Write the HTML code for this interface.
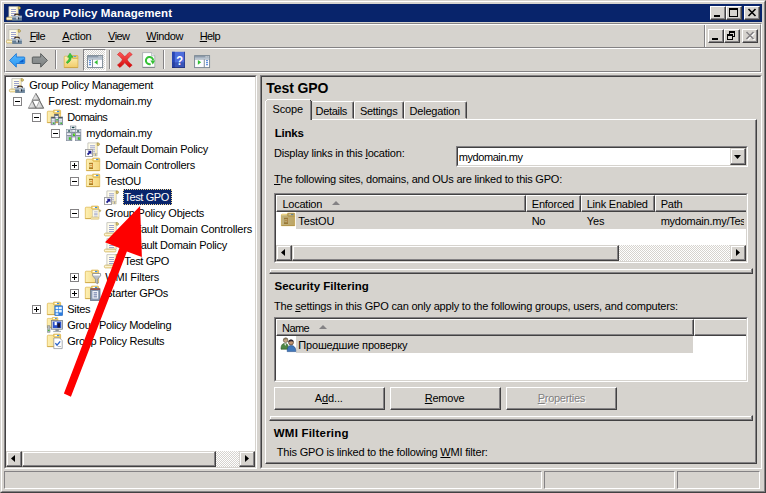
<!DOCTYPE html>
<html><head><meta charset="utf-8"><title>Group Policy Management</title>
<style>
*{box-sizing:border-box;margin:0;padding:0}
html,body{width:766px;height:493px;overflow:hidden;background:#d6d3ce}
body{position:relative;font-family:"Liberation Sans","Noto Sans CJK SC",sans-serif;font-size:11px;color:#000}
.a{position:absolute}
.t{position:absolute;white-space:nowrap;line-height:16px;height:16px}
u{text-decoration:underline;text-underline-offset:1px}
svg{position:absolute;overflow:visible}
.btn{position:absolute;background:#d6d3ce;border:1px solid;border-color:#fff #424142 #424142 #fff;box-shadow:inset -1px -1px 0 #848284}
.sb{position:absolute;background:#d6d3ce;border:1px solid;border-color:#d6d3ce #424142 #424142 #d6d3ce;box-shadow:inset -1px -1px 0 #848284,inset 1px 1px 0 #fff}
.sunk{position:absolute;border:1px solid;border-color:#848284 #fff #fff #848284}
.sunk>.in{position:absolute;left:0;top:0;right:0;bottom:0;border:1px solid;border-color:#424142 #d6d3ce #d6d3ce #424142}
.chk{position:absolute;background-image:conic-gradient(#fff 25%,#d6d3ce 0 50%,#fff 0 75%,#d6d3ce 0);background-size:2px 2px}
.hd{position:absolute;background:#d6d3ce;border:1px solid;border-color:#fff #424142 #424142 #fff;box-shadow:inset -1px -1px 0 #848284}
.rs{position:absolute;height:6px;border:1px solid;border-color:#d6d3ce #424142 #424142 #d6d3ce;box-shadow:inset -1px -1px 0 #848284,inset 1px 1px 0 #fff}
.eb{position:absolute;width:9px;height:9px;border:1px solid #848284;background:#fff}
.eb:before{content:"";position:absolute;left:1px;top:3px;width:5px;height:1px;background:#000}
.eb.p:after{content:"";position:absolute;left:3px;top:1px;width:1px;height:5px;background:#000}
.tsep{position:absolute;top:50px;width:2px;height:19px;border-left:1px solid #848284;border-right:1px solid #fff}
</style></head><body>
<!-- window frame -->
<div class="a" style="left:0;top:0;width:766px;height:493px;border:1px solid;border-color:#d6d3ce #424142 #424142 #d6d3ce"></div>
<div class="a" style="left:1px;top:1px;width:764px;height:491px;border:1px solid;border-color:#fff #848284 #848284 #fff"></div>
<!-- title bar -->
<div class="a" style="left:4px;top:4px;width:758px;height:18px;background:#08246b"></div>
<div class="btn" style="left:710px;top:6px;width:16px;height:14px"><div class="a" style="left:3px;top:8px;width:6px;height:2px;background:#000"></div></div>
<div class="btn" style="left:726px;top:6px;width:16px;height:14px"><div class="a" style="left:2px;top:1px;width:9px;height:9px;border:1px solid #000;border-top-width:2px"></div></div>
<div class="btn" style="left:744px;top:6px;width:16px;height:14px"><svg style="left:3px;top:2px" width="8" height="7" viewBox="0 0 8 7"><path d="M0.5 0L7.5 7M7.5 0L0.5 7" stroke="#000" stroke-width="1.6" fill="none"/></svg></div>
<!-- rebar -->
<div class="a" style="left:4px;top:23px;width:758px;height:50px;border:1px solid;border-color:#848284 #fff #fff #848284"></div>
<div class="a" style="left:5px;top:24px;width:756px;height:48px;border:1px solid;border-color:#fff #848284 #848284 #fff"></div>
<div class="a" style="left:6px;top:47px;width:754px;height:2px;border-top:1px solid #848284;border-bottom:1px solid #fff"></div>
<div class="a" style="left:704px;top:25px;width:2px;height:22px;border-left:1px solid #848284;border-right:1px solid #fff"></div>
<!-- mdi buttons -->
<div class="btn" style="left:708px;top:29px;width:16px;height:14px"><div class="a" style="left:3px;top:8px;width:6px;height:2px;background:#000"></div></div>
<div class="btn" style="left:724px;top:29px;width:16px;height:14px"><div class="a" style="left:4px;top:1px;width:6px;height:6px;border:1px solid #000;border-top-width:2px"></div><div class="a" style="left:2px;top:4px;width:6px;height:6px;border:1px solid #000;border-top-width:2px;background:#d6d3ce"></div></div>
<div class="btn" style="left:742px;top:29px;width:16px;height:14px"><svg style="left:4px;top:3px" width="8" height="7" viewBox="0 0 8 7"><path d="M0.5 0L7.5 7M7.5 0L0.5 7" stroke="#fff" stroke-width="1.6" fill="none"/></svg><svg style="left:3px;top:2px" width="8" height="7" viewBox="0 0 8 7"><path d="M0.5 0L7.5 7M7.5 0L0.5 7" stroke="#848284" stroke-width="1.6" fill="none"/></svg></div>
<!-- toolbar -->
<div class="tsep" style="left:55px"></div><div class="tsep" style="left:109px"></div><div class="tsep" style="left:163px"></div>
<div class="chk" style="left:83px;top:49px;width:23px;height:22px"></div>
<div class="a" style="left:83px;top:49px;width:23px;height:22px;border:1px solid;border-color:#848284 #fff #fff #848284"></div>
<!-- left panel -->
<div class="sunk" style="left:4px;top:75px;width:253px;height:394px"><div class="in" style="background:#fff"></div></div>
<div class="a" style="left:6px;top:451px;width:249px;height:16px;background:#d6d3ce"></div>
<div class="chk" style="left:216px;top:451px;width:23px;height:16px"></div>
<div class="sb" style="left:6px;top:451px;width:16px;height:16px"><svg style="left:4px;top:3px" width="4" height="7" viewBox="0 0 4 7"><path d="M4 0L4 7L0 3.5Z" fill="#000"/></svg></div>
<div class="sb" style="left:22px;top:451px;width:194px;height:16px"></div>
<div class="sb" style="left:239px;top:451px;width:16px;height:16px"><svg style="left:5px;top:3px" width="4" height="7" viewBox="0 0 4 7"><path d="M0 0L0 7L4 3.5Z" fill="#000"/></svg></div>
<!-- tree selection -->
<div class="a" style="left:123px;top:189px;width:49px;height:16px;background:#08246b;outline:1px dotted #f5db95;outline-offset:-1px"></div>
<!-- expand boxes -->
<div class="eb" style="left:13px;top:97px"></div>
<div class="eb" style="left:32px;top:113px"></div>
<div class="eb" style="left:51px;top:129px"></div>
<div class="eb p" style="left:70px;top:161px"></div>
<div class="eb" style="left:70px;top:177px"></div>
<div class="eb" style="left:70px;top:209px"></div>
<div class="eb p" style="left:70px;top:273px"></div>
<div class="eb p" style="left:70px;top:289px"></div>
<div class="eb p" style="left:32px;top:305px"></div>
<!-- right panel -->
<div class="sunk" style="left:260px;top:75px;width:502px;height:394px"><div class="in"></div></div>
<!-- tab page -->
<div class="a" style="left:265px;top:119px;width:492px;height:345px;border:1px solid;border-color:#fff #424142 #424142 #fff;box-shadow:inset -1px -1px 0 #848284"></div>
<!-- tabs: unselected -->
<div class="a" style="left:312px;top:101px;width:42px;height:18px;border:1px solid;border-color:#fff #424142 transparent transparent;box-shadow:inset -1px 0 0 #848284;border-radius:0 2px 0 0"></div>
<div class="a" style="left:354px;top:101px;width:50px;height:18px;border:1px solid;border-color:#fff #424142 transparent #fff;box-shadow:inset -1px 0 0 #848284;border-radius:2px 2px 0 0"></div>
<div class="a" style="left:404px;top:101px;width:63px;height:18px;border:1px solid;border-color:#fff #424142 transparent #fff;box-shadow:inset -1px 0 0 #848284;border-radius:2px 2px 0 0"></div>
<!-- selected tab -->
<div class="a" style="left:266px;top:100px;width:44px;height:20px;background:#d6d3ce"></div>
<div class="a" style="left:265px;top:101px;width:1px;height:19px;background:#fff"></div>
<div class="a" style="left:266px;top:100px;width:1px;height:1px;background:#fff"></div>
<div class="a" style="left:267px;top:99px;width:43px;height:1px;background:#fff"></div>
<div class="a" style="left:310px;top:100px;width:1px;height:1px;background:#424142"></div>
<div class="a" style="left:310px;top:101px;width:1px;height:19px;background:#848284"></div>
<div class="a" style="left:311px;top:101px;width:1px;height:19px;background:#424142"></div>
<!-- combo -->
<div class="sunk" style="left:456px;top:146px;width:292px;height:21px"><div class="in" style="background:#fff"></div></div>
<div class="sb" style="left:730px;top:148px;width:16px;height:17px"><svg style="left:3px;top:6px" width="7" height="4" viewBox="0 0 7 4"><path d="M0 0L7 0L3.5 4Z" fill="#000"/></svg></div>
<!-- list 1 -->
<div class="sunk" style="left:274px;top:193px;width:474px;height:70px"><div class="in" style="background:#fff"></div></div>
<div class="a" style="left:276px;top:195px;width:470px;height:66px;overflow:hidden">
 <div class="hd" style="left:0;top:0;width:250px;height:17px"></div>
 <div class="hd" style="left:250px;top:0;width:55px;height:17px"></div>
 <div class="hd" style="left:305px;top:0;width:74px;height:17px"></div>
 <div class="hd" style="left:379px;top:0;width:120px;height:17px"></div>
 <svg style="left:56px;top:6px" width="8" height="4" viewBox="0 0 8 4"><path d="M0 4L4 0L8 4Z" fill="#848284"/></svg>
 <div class="a" style="left:20px;top:17px;width:460px;height:17px;background:#d6d3ce"></div>
 <div class="a" style="left:0;top:50px;width:470px;height:16px;background:#d6d3ce"></div>
 <div class="chk" style="left:343px;top:50px;width:111px;height:16px"></div>
 <div class="sb" style="left:0;top:50px;width:16px;height:16px"><svg style="left:4px;top:3px" width="4" height="7" viewBox="0 0 4 7"><path d="M4 0L4 7L0 3.5Z" fill="#000"/></svg></div>
 <div class="sb" style="left:16px;top:50px;width:327px;height:16px"></div>
 <div class="sb" style="left:454px;top:50px;width:16px;height:16px"><svg style="left:5px;top:3px" width="4" height="7" viewBox="0 0 4 7"><path d="M0 0L0 7L4 3.5Z" fill="#000"/></svg></div>
</div>
<!-- separators -->
<div class="rs" style="left:269px;top:268px;width:484px"></div>
<div class="rs" style="left:269px;top:415px;width:484px"></div>
<!-- list 2 -->
<div class="sunk" style="left:274px;top:317px;width:474px;height:65px"><div class="in" style="background:#fff"></div></div>
<div class="a" style="left:276px;top:319px;width:470px;height:61px;overflow:hidden">
 <div class="hd" style="left:0;top:0;width:418px;height:17px"></div>
 <div class="hd" style="left:418px;top:0;width:80px;height:17px"></div>
 <svg style="left:43px;top:6px" width="8" height="4" viewBox="0 0 8 4"><path d="M0 4L4 0L8 4Z" fill="#848284"/></svg>
 <div class="a" style="left:20px;top:17px;width:397px;height:17px;background:#d6d3ce"></div>
</div>
<!-- buttons -->
<div class="btn" style="left:274px;top:387px;width:111px;height:23px"></div>
<div class="btn" style="left:390px;top:387px;width:111px;height:23px"></div>
<div class="btn" style="left:506px;top:387px;width:111px;height:23px"></div>
<!-- status bar -->
<div class="a" style="left:4px;top:471px;width:538px;height:18px;border:1px solid;border-color:#848284 #fff #fff #848284"></div>
<div class="a" style="left:544px;top:471px;width:131px;height:18px;border:1px solid;border-color:#848284 #fff #fff #848284"></div>
<div class="a" style="left:677px;top:471px;width:83px;height:18px;border:1px solid;border-color:#848284 #fff #fff #848284"></div>
<div class="t" style="left:24.70px;top:4.62px;font-size:11.5px;letter-spacing:0.106px;font-weight:bold;color:#fff;">Group Policy Management</div>
<div class="t" style="left:29.70px;top:28.19px;font-size:11px;letter-spacing:-0.634px;"><u>F</u>ile</div>
<div class="t" style="left:62.30px;top:28.19px;font-size:11px;letter-spacing:-0.230px;"><u>A</u>ction</div>
<div class="t" style="left:108.10px;top:28.19px;font-size:11px;letter-spacing:-0.589px;"><u>V</u>iew</div>
<div class="t" style="left:146.30px;top:28.19px;font-size:11px;letter-spacing:-0.404px;"><u>W</u>indow</div>
<div class="t" style="left:199.70px;top:28.19px;font-size:11px;letter-spacing:-0.581px;"><u>H</u>elp</div>
<div class="t" style="left:29.30px;top:77.19px;font-size:11px;letter-spacing:-0.284px;">Group Policy Management</div>
<div class="t" style="left:48.30px;top:93.19px;font-size:11px;letter-spacing:-0.108px;">Forest: mydomain.my</div>
<div class="t" style="left:67.30px;top:109.19px;font-size:11px;letter-spacing:-0.487px;">Domains</div>
<div class="t" style="left:86.30px;top:125.19px;font-size:11px;letter-spacing:-0.252px;">mydomain.my</div>
<div class="t" style="left:105.30px;top:141.19px;font-size:11px;letter-spacing:-0.263px;">Default Domain Policy</div>
<div class="t" style="left:105.30px;top:157.19px;font-size:11px;letter-spacing:-0.248px;">Domain Controllers</div>
<div class="t" style="left:105.30px;top:173.19px;font-size:11px;letter-spacing:-0.131px;">TestOU</div>
<div class="t" style="left:124.30px;top:189.19px;font-size:11px;letter-spacing:-0.373px;color:#fff;">Test GPO</div>
<div class="t" style="left:105.30px;top:205.19px;font-size:11px;letter-spacing:-0.231px;">Group Policy Objects</div>
<div class="t" style="left:124.30px;top:221.19px;font-size:11px;letter-spacing:-0.168px;">Default Domain Controllers</div>
<div class="t" style="left:124.30px;top:237.19px;font-size:11px;letter-spacing:-0.263px;">Default Domain Policy</div>
<div class="t" style="left:124.30px;top:253.19px;font-size:11px;letter-spacing:-0.373px;">Test GPO</div>
<div class="t" style="left:105.30px;top:269.19px;font-size:11px;letter-spacing:-0.155px;">WMI Filters</div>
<div class="t" style="left:105.30px;top:285.19px;font-size:11px;letter-spacing:-0.278px;">Starter GPOs</div>
<div class="t" style="left:67.30px;top:301.19px;font-size:11px;letter-spacing:-0.314px;">Sites</div>
<div class="t" style="left:67.30px;top:317.19px;font-size:11px;letter-spacing:-0.322px;">Group Policy Modeling</div>
<div class="t" style="left:67.30px;top:333.19px;font-size:11px;letter-spacing:-0.291px;">Group Policy Results</div>
<div class="t" style="left:266.30px;top:80.15px;font-size:14px;letter-spacing:-0.083px;font-weight:bold;">Test GPO</div>
<div class="t" style="left:272.50px;top:101.19px;font-size:11px;letter-spacing:-0.121px;">Scope</div>
<div class="t" style="left:315.60px;top:103.19px;font-size:11px;letter-spacing:-0.318px;">Details</div>
<div class="t" style="left:359.90px;top:103.19px;font-size:11px;letter-spacing:-0.281px;">Settings</div>
<div class="t" style="left:409.60px;top:103.19px;font-size:11px;letter-spacing:-0.219px;">Delegation</div>
<div class="t" style="left:274.80px;top:125.22px;font-size:11.5px;letter-spacing:-0.249px;font-weight:bold;">Links</div>
<div class="t" style="left:274.00px;top:144.69px;font-size:11px;letter-spacing:-0.208px;">Display links in this <u>l</u>ocation:</div>
<div class="t" style="left:458.80px;top:148.89px;font-size:11px;letter-spacing:-0.434px;">mydomain.my</div>
<div class="t" style="left:274.00px;top:170.69px;font-size:11px;letter-spacing:-0.220px;"><u>T</u>he following sites, domains, and OUs are linked to this GPO:</div>
<div class="t" style="left:282.50px;top:195.69px;font-size:11px;letter-spacing:-0.249px;">Location</div>
<div class="t" style="left:531.80px;top:195.69px;font-size:11px;letter-spacing:-0.229px;">Enforced</div>
<div class="t" style="left:586.70px;top:195.69px;font-size:11px;letter-spacing:-0.217px;">Link Enabled</div>
<div class="t" style="left:660.70px;top:195.69px;font-size:11px;letter-spacing:-0.235px;">Path</div>
<div class="t" style="left:298.30px;top:212.89px;font-size:11px;letter-spacing:-0.098px;">TestOU</div>
<div class="t" style="left:531.80px;top:212.89px;font-size:11px;letter-spacing:-0.431px;">No</div>
<div class="t" style="left:586.70px;top:212.89px;font-size:11px;letter-spacing:-0.118px;">Yes</div>
<div class="t" style="left:660.70px;top:212.89px;font-size:11px;letter-spacing:-0.250px;width:83.6px;overflow:hidden;">mydomain.my/TestOU</div>
<div class="t" style="left:274.50px;top:278.02px;font-size:11.5px;letter-spacing:0.020px;font-weight:bold;">Security Filtering</div>
<div class="t" style="left:274.00px;top:298.09px;font-size:11px;letter-spacing:-0.195px;">The <u>s</u>ettings in this GPO can only apply to the following groups, users, and computers:</div>
<div class="t" style="left:282.10px;top:320.19px;font-size:11px;letter-spacing:-0.611px;">Name</div>
<div class="t" style="left:298.30px;top:337.49px;font-size:11px;letter-spacing:-0.161px;">Прошедшие проверку</div>
<div class="t" style="left:314.80px;top:389.89px;font-size:11px;letter-spacing:-0.125px;">A<u>d</u>d...</div>
<div class="t" style="left:424.80px;top:389.89px;font-size:11px;letter-spacing:-0.245px;"><u>R</u>emove</div>
<div class="t" style="left:538.70px;top:390.89px;font-size:11px;letter-spacing:-0.284px;color:#fff;"><u>P</u>roperties</div>
<div class="t" style="left:537.70px;top:389.89px;font-size:11px;letter-spacing:-0.284px;color:#808080;"><u>P</u>roperties</div>
<div class="t" style="left:273.80px;top:424.82px;font-size:11.5px;letter-spacing:0.209px;font-weight:bold;">WMI Filtering</div>
<div class="t" style="left:276.80px;top:443.69px;font-size:11px;letter-spacing:-0.195px;">This GPO is linked to the following <u>W</u>MI filter:</div>
<svg style="left:6px;top:6px" width="16" height="16" viewBox="0 0 16 16"><g transform="translate(0,0)"><path d="M2.9 0.6H12.2V11.2H2.9Z" fill="#fffdec" stroke="#b4b4ae" stroke-width="0.7"/><path d="M10.4 1H11.9V11H10.4Z" fill="#f8ecbc"/><path d="M12.1 0.5C13.8 0.2 14.9 1.2 14.5 2.4C14.2 3.3 13.2 3.6 12.3 3.1Z" fill="#d8c064" stroke="#8c7a34" stroke-width="0.5"/><rect x="5" y="3" width="5" height="1" fill="#9ca2cc"/><rect x="5" y="5" width="5" height="1" fill="#9ca2cc"/><rect x="5" y="7" width="5" height="1" fill="#9ca2cc"/><rect x="5" y="9" width="5" height="1" fill="#9ca2cc"/><path d="M1.2 11.2H11.2C12.2 11.2 12.2 13.9 11.2 13.9H1.2C0.1 13.9 0.1 11.2 1.2 11.2Z" fill="#fff8d8" stroke="#c4a850" stroke-width="0.7"/><rect x="1.4" y="12.9" width="9.6" height="0.8" fill="#ead388"/></g><path d="M8.4 9.9C8.6 7.5 13.4 7.5 13.6 9.9" fill="none" stroke="#3c2a1e" stroke-width="1.1"/><linearGradient id="g1" x1="0" y1="0" x2="0" y2="1"><stop offset="0" stop-color="#b9c8d6"/><stop offset="1" stop-color="#4f6c88"/></linearGradient><rect x="6.2" y="9.7" width="9.7" height="5.1" fill="url(#g1)"/><rect x="6.2" y="12.1" width="9.7" height="0.7" fill="#4a627a" opacity="0.7"/><rect x="10.5" y="11.1" width="1.3" height="2.3" fill="#fff"/><rect x="11.8" y="11.3" width="1" height="2.1" fill="#1c2228"/></svg>
<svg style="left:6px;top:29px" width="16" height="16" viewBox="0 0 16 16"><g transform="translate(0,0)"><path d="M2.9 0.6H12.2V11.2H2.9Z" fill="#fffdec" stroke="#b4b4ae" stroke-width="0.7"/><path d="M10.4 1H11.9V11H10.4Z" fill="#f8ecbc"/><path d="M12.1 0.5C13.8 0.2 14.9 1.2 14.5 2.4C14.2 3.3 13.2 3.6 12.3 3.1Z" fill="#d8c064" stroke="#8c7a34" stroke-width="0.5"/><rect x="5" y="3" width="5" height="1" fill="#9ca2cc"/><rect x="5" y="5" width="5" height="1" fill="#9ca2cc"/><rect x="5" y="7" width="5" height="1" fill="#9ca2cc"/><rect x="5" y="9" width="5" height="1" fill="#9ca2cc"/><path d="M1.2 11.2H11.2C12.2 11.2 12.2 13.9 11.2 13.9H1.2C0.1 13.9 0.1 11.2 1.2 11.2Z" fill="#fff8d8" stroke="#c4a850" stroke-width="0.7"/><rect x="1.4" y="12.9" width="9.6" height="0.8" fill="#ead388"/></g><path d="M8.4 9.9C8.6 7.5 13.4 7.5 13.6 9.9" fill="none" stroke="#3c2a1e" stroke-width="1.1"/><linearGradient id="g2" x1="0" y1="0" x2="0" y2="1"><stop offset="0" stop-color="#b9c8d6"/><stop offset="1" stop-color="#4f6c88"/></linearGradient><rect x="6.2" y="9.7" width="9.7" height="5.1" fill="url(#g2)"/><rect x="6.2" y="12.1" width="9.7" height="0.7" fill="#4a627a" opacity="0.7"/><rect x="10.5" y="11.1" width="1.3" height="2.3" fill="#fff"/><rect x="11.8" y="11.3" width="1" height="2.1" fill="#1c2228"/></svg>
<svg style="left:9px;top:52px" width="16" height="16" viewBox="0 0 16 16"><linearGradient id="g3" x1="0" y1="0" x2="0" y2="1"><stop offset="0" stop-color="#58b8ff"/><stop offset="1" stop-color="#2c98f0"/></linearGradient><path d="M0.6 8.4L7.3 1.6V5H15Q15.7 5 15.7 5.7V10.8Q15.7 11.5 15 11.5H7.3V15.2Z" fill="url(#g3)" stroke="#1a76d6" stroke-width="0.9" stroke-linejoin="round"/><path d="M9.4 10.6L14.6 7V10.6Z" fill="#0c5cc8"/></svg>
<svg style="left:32px;top:52px" width="16" height="16" viewBox="0 0 16 16"><linearGradient id="g4" x1="0" y1="0" x2="0" y2="1"><stop offset="0" stop-color="#9a9e9e"/><stop offset="1" stop-color="#7c8080"/></linearGradient><path d="M15.4 8.4L8.7 1.6V5H1Q0.3 5 0.3 5.7V10.8Q0.3 11.5 1 11.5H8.7V15.2Z" fill="url(#g4)" stroke="#505454" stroke-width="0.9" stroke-linejoin="round"/></svg>
<svg style="left:63px;top:52px" width="16" height="16" viewBox="0 0 16 16"><linearGradient id="g5" x1="0" y1="0" x2="0" y2="1"><stop offset="0" stop-color="#fdf0b6"/><stop offset="1" stop-color="#f1cb68"/></linearGradient><path d="M9.4 3.5H14.2Q14.9 3.5 14.9 4.2V6.6H9.4Z" fill="#f3d274" stroke="#d4aa40" stroke-width="0.7"/><rect x="10.6" y="4.1" width="2.6" height="1" fill="#4a98ea"/><path d="M1.2 5Q1.2 4.2 2 4.2H8.4L9.6 6.4H14.9V15.6H1.2Z" fill="url(#g5)" stroke="#d8b044" stroke-width="0.7"/><rect x="1.2" y="15" width="13.7" height="0.7" fill="#c9a040"/><path d="M7 1.2L9.8 5.2H8.2C8.2 8 6.8 10 4.2 11.4L3.4 10C5.4 8.8 6.2 7.4 6.2 5.2H4.6Z" fill="#3ccc3c" stroke="#22a028" stroke-width="0.6" stroke-linejoin="round"/></svg>
<svg style="left:87px;top:53px" width="16" height="16" viewBox="0 0 16 16"><rect x="0.6" y="2.6" width="15" height="12" fill="#fcfcff" stroke="#74828e" stroke-width="0.9"/><rect x="1" y="3" width="14.2" height="1.8" fill="#8c9aaa"/><rect x="1" y="4.8" width="14.2" height="1.2" fill="#b8c4d0"/><rect x="1" y="6" width="14.2" height="0.5" fill="#8c98a4"/><rect x="11.6" y="3.3" width="1" height="1" fill="#fff"/><rect x="13.6" y="3.3" width="1" height="1" fill="#fff"/><rect x="5" y="6.4" width="0.9" height="8" fill="#74828e"/><rect x="2" y="7.2" width="2" height="1" fill="#3a7ad8"/><rect x="2" y="9.2" width="2" height="1" fill="#3a7ad8"/><rect x="2" y="11.2" width="2" height="1" fill="#3a7ad8"/><path d="M10.6 6.9V11.7L7.3 9.3Z" fill="#35c035"/></svg>
<svg style="left:117px;top:52px" width="16" height="16" viewBox="0 0 16 16"><linearGradient id="g6" x1="0" y1="0" x2="0" y2="1"><stop offset="0" stop-color="#ff5a5a"/><stop offset="1" stop-color="#d40808"/></linearGradient><path d="M0.4 2.6L2.8 0.2C5 1.6 6.6 3.2 7.8 5C9 3.2 10.6 1.6 12.8 0.2L15.2 2.6C13 4.2 11.4 5.8 10.2 7.8C11.4 9.8 13 11.4 15.2 13L12.8 15.4C10.6 14 9 12.4 7.8 10.6C6.6 12.4 5 14 2.8 15.4L0.4 13C2.6 11.4 4.2 9.8 5.4 7.8C4.2 5.8 2.6 4.2 0.4 2.6Z" fill="url(#g6)" stroke="#c41010" stroke-width="0.5"/></svg>
<svg style="left:140px;top:52px" width="16" height="16" viewBox="0 0 16 16"><path d="M2.6 0.6H11.6L14.8 3.8V15.4H2.6Z" fill="#fff" stroke="#9a9ea4" stroke-width="0.7"/><path d="M14.8 15.4H2.6" stroke="#70747a" stroke-width="0.8"/><path d="M11.6 0.6V3.8H14.8" fill="#eceef0" stroke="#9a9ea4" stroke-width="0.6"/><path d="M13.1 8.4A3.6 3.6 0 1 0 10.6 12" fill="none" stroke="#34c034" stroke-width="2"/><path d="M10.4 8.6H15.2L12.8 12.6Z" fill="#34c034"/></svg>
<svg style="left:171px;top:52px" width="16" height="16" viewBox="0 0 16 16"><rect x="1" y="-0.2" width="12.8" height="16" fill="#4c6cdc"/><rect x="1" y="-0.2" width="2.8" height="16" fill="#2846b4"/><rect x="1" y="10.3" width="12.8" height="5.5" fill="#22388c" opacity="0.45"/><rect x="13.1" y="-0.2" width="0.7" height="16" fill="#1c2c80"/><rect x="1" y="15.1" width="12.8" height="0.7" fill="#18246a"/><text x="0" y="0" text-anchor="middle" font-family="Liberation Sans, sans-serif" font-weight="bold" font-size="13" fill="#fff" transform="translate(8.7,13) scale(0.86,1)">?</text></svg>
<svg style="left:194px;top:53px" width="16" height="16" viewBox="0 0 16 16"><rect x="0.6" y="2.6" width="15" height="12" fill="#fcfcff" stroke="#74828e" stroke-width="0.9"/><rect x="1" y="3" width="14.2" height="1.8" fill="#8c9aaa"/><rect x="1" y="4.8" width="14.2" height="1.2" fill="#b8c4d0"/><rect x="1" y="6" width="14.2" height="0.5" fill="#8c98a4"/><rect x="11.6" y="3.3" width="1" height="1" fill="#fff"/><rect x="13.6" y="3.3" width="1" height="1" fill="#fff"/><rect x="9.8" y="6.4" width="0.9" height="8" fill="#74828e"/><rect x="12" y="7.2" width="2" height="1" fill="#3a7ad8"/><rect x="12" y="9.2" width="2" height="1" fill="#3a7ad8"/><rect x="12" y="11.2" width="2" height="1" fill="#3a7ad8"/><path d="M3.9 6.9V11.7L7.2 9.3Z" fill="#35c035"/></svg>
<svg style="left:9px;top:78px" width="16" height="16" viewBox="0 0 16 16"><g transform="translate(0,0)"><path d="M2.9 0.6H12.2V11.2H2.9Z" fill="#fffdec" stroke="#b4b4ae" stroke-width="0.7"/><path d="M10.4 1H11.9V11H10.4Z" fill="#f8ecbc"/><path d="M12.1 0.5C13.8 0.2 14.9 1.2 14.5 2.4C14.2 3.3 13.2 3.6 12.3 3.1Z" fill="#d8c064" stroke="#8c7a34" stroke-width="0.5"/><rect x="5" y="3" width="5" height="1" fill="#9ca2cc"/><rect x="5" y="5" width="5" height="1" fill="#9ca2cc"/><rect x="5" y="7" width="5" height="1" fill="#9ca2cc"/><rect x="5" y="9" width="5" height="1" fill="#9ca2cc"/><path d="M1.2 11.2H11.2C12.2 11.2 12.2 13.9 11.2 13.9H1.2C0.1 13.9 0.1 11.2 1.2 11.2Z" fill="#fff8d8" stroke="#c4a850" stroke-width="0.7"/><rect x="1.4" y="12.9" width="9.6" height="0.8" fill="#ead388"/></g><path d="M8.4 9.9C8.6 7.5 13.4 7.5 13.6 9.9" fill="none" stroke="#3c2a1e" stroke-width="1.1"/><linearGradient id="g7" x1="0" y1="0" x2="0" y2="1"><stop offset="0" stop-color="#b9c8d6"/><stop offset="1" stop-color="#4f6c88"/></linearGradient><rect x="6.2" y="9.7" width="9.7" height="5.1" fill="url(#g7)"/><rect x="6.2" y="12.1" width="9.7" height="0.7" fill="#4a627a" opacity="0.7"/><rect x="10.5" y="11.1" width="1.3" height="2.3" fill="#fff"/><rect x="11.8" y="11.3" width="1" height="2.1" fill="#1c2228"/></svg>
<svg style="left:28px;top:93px" width="16" height="16" viewBox="0 0 16 16"><linearGradient id="g8" x1="0" y1="0" x2="1" y2="0"><stop offset="0" stop-color="#f2f2f2"/><stop offset="1" stop-color="#c2c2c2"/></linearGradient><path d="M7.9 0.4L11.8 7.2H4.2Z" fill="url(#g8)" stroke="#8e8e8e" stroke-width="0.8" stroke-linejoin="round"/><path d="M4.3 7.7L8 15.2H0.4Z" fill="url(#g8)" stroke="#8e8e8e" stroke-width="0.8" stroke-linejoin="round"/><path d="M11.6 7.7L15.6 15.2H8Z" fill="url(#g8)" stroke="#8e8e8e" stroke-width="0.8" stroke-linejoin="round"/><path d="M7.9 0.4L11.8 7.2M11.6 7.7L15.6 15.2M4.3 7.7L8 15.2" stroke="#6a6a6a" stroke-width="0.9" fill="none"/><path d="M0.4 15.2H15.6M4.2 7.2H11.8" stroke="#707070" stroke-width="0.8" fill="none"/></svg>
<svg style="left:47px;top:109px" width="16" height="16" viewBox="0 0 16 16"><g transform="translate(0,0)"><linearGradient id="g9" x1="0" y1="0" x2="1" y2="0"><stop offset="0" stop-color="#fdf0b4"/><stop offset="1" stop-color="#f5d67c"/></linearGradient><path d="M6.6 1.1H12.8Q13.6 1.1 13.6 1.9V4.6H6.6Z" fill="#f5d676" stroke="#d8ae42" stroke-width="0.7"/><rect x="7.7" y="1.9" width="2.3" height="1.2" fill="#fff"/><rect x="10" y="1.9" width="2.2" height="1.2" fill="#3a8ee6"/><path d="M0.3 3Q0.3 2.2 1.1 2.2H5.8L7.2 4.3H13.6V13.7H0.3Z" fill="url(#g9)" stroke="#dcb448" stroke-width="0.7"/><rect x="0.3" y="13.1" width="13.3" height="0.7" fill="#c9a040"/></g><rect x="7.4" y="5.2" width="4.2" height="7" fill="#b0b9c6" stroke="#6a7484" stroke-width="0.6"/><rect x="7.7" y="5.5" width="3.6" height="1" fill="#2c3640"/><rect x="8.1" y="7" width="2.8" height="1" fill="#f4f6fa"/><rect x="8.1" y="8.8" width="2.8" height="1" fill="#f4f6fa"/><rect x="9.4" y="10" width="1.4" height="1.4" fill="#34c024"/><rect x="4.1" y="8" width="4.1" height="7.8" fill="#b0b9c6" stroke="#6a7484" stroke-width="0.6"/><rect x="4.4" y="8.3" width="3.5" height="1" fill="#2c3640"/><rect x="4.8" y="9.8" width="2.7" height="1" fill="#f4f6fa"/><rect x="4.8" y="11.6" width="2.7" height="1" fill="#f4f6fa"/><rect x="6" y="13.6" width="1.4" height="1.4" fill="#34c024"/><rect x="11.3" y="8" width="4.4" height="7.8" fill="#b0b9c6" stroke="#6a7484" stroke-width="0.6"/><rect x="11.6" y="8.3" width="3.8" height="1" fill="#2c3640"/><rect x="12" y="9.8" width="3" height="1" fill="#f4f6fa"/><rect x="12" y="11.6" width="3" height="1" fill="#f4f6fa"/><rect x="13.5" y="13.6" width="1.4" height="1.4" fill="#34c024"/></svg>
<svg style="left:66px;top:125px" width="16" height="16" viewBox="0 0 16 16"><linearGradient id="g10" x1="0" y1="0" x2="1" y2="0"><stop offset="0" stop-color="#c9d0dc"/><stop offset="1" stop-color="#9aa4b6"/></linearGradient><rect x="4.3" y="1" width="5.6" height="11" fill="url(#g10)" stroke="#7c8796" stroke-width="0.6"/><rect x="4.8" y="1.5" width="4.6" height="2.4" fill="#f4f6fa"/><ellipse cx="7.1" cy="2.6" rx="1.5" ry="0.75" fill="#164848"/><rect x="4.8" y="4.1" width="4.6" height="0.6" fill="#687282"/><rect x="5.1" y="5.1" width="4" height="1.5" fill="#f4f6fa"/><rect x="4.8" y="7.1" width="4.6" height="0.6" fill="#687282"/><rect x="6.9" y="8.6" width="2.2" height="2.4" fill="#34c024"/><rect x="7.9" y="8.8" width="1" height="1" fill="#b8e838"/><linearGradient id="g11" x1="0" y1="0" x2="1" y2="0"><stop offset="0" stop-color="#c9d0dc"/><stop offset="1" stop-color="#9aa4b6"/></linearGradient><rect x="0.3" y="4.3" width="5.6" height="11.4" fill="url(#g11)" stroke="#7c8796" stroke-width="0.6"/><rect x="0.8" y="4.8" width="4.6" height="2.4" fill="#f4f6fa"/><ellipse cx="3.1" cy="5.9" rx="1.5" ry="0.75" fill="#164848"/><rect x="0.8" y="7.4" width="4.6" height="0.6" fill="#687282"/><rect x="1.1" y="8.4" width="4" height="1.5" fill="#f4f6fa"/><rect x="0.8" y="10.4" width="4.6" height="0.6" fill="#687282"/><rect x="2.9" y="12.3" width="2.2" height="2.4" fill="#34c024"/><rect x="3.9" y="12.5" width="1" height="1" fill="#b8e838"/><linearGradient id="g12" x1="0" y1="0" x2="1" y2="0"><stop offset="0" stop-color="#c9d0dc"/><stop offset="1" stop-color="#9aa4b6"/></linearGradient><rect x="9.3" y="4.3" width="5.6" height="11.4" fill="url(#g12)" stroke="#7c8796" stroke-width="0.6"/><rect x="9.8" y="4.8" width="4.6" height="2.4" fill="#f4f6fa"/><ellipse cx="12.1" cy="5.9" rx="1.5" ry="0.75" fill="#164848"/><rect x="9.8" y="7.4" width="4.6" height="0.6" fill="#687282"/><rect x="10.1" y="8.4" width="4" height="1.5" fill="#f4f6fa"/><rect x="9.8" y="10.4" width="4.6" height="0.6" fill="#687282"/><rect x="11.9" y="12.3" width="2.2" height="2.4" fill="#34c024"/><rect x="12.9" y="12.5" width="1" height="1" fill="#b8e838"/></svg>
<svg style="left:85px;top:141px" width="16" height="16" viewBox="0 0 16 16"><g transform="translate(0,1.3)"><path d="M2.9 0.6H12.2V11.2H2.9Z" fill="#fffdec" stroke="#b4b4ae" stroke-width="0.7"/><path d="M10.4 1H11.9V11H10.4Z" fill="#f8ecbc"/><path d="M12.1 0.5C13.8 0.2 14.9 1.2 14.5 2.4C14.2 3.3 13.2 3.6 12.3 3.1Z" fill="#d8c064" stroke="#8c7a34" stroke-width="0.5"/><rect x="5" y="3" width="5" height="1" fill="#9ca2cc"/><rect x="5" y="5" width="5" height="1" fill="#9ca2cc"/><rect x="5" y="7" width="5" height="1" fill="#9ca2cc"/><rect x="5" y="9" width="5" height="1" fill="#9ca2cc"/></g><path d="M8.6 12.4H12.2V15H8.6Z" fill="#f0dfa0" stroke="#b4b4ae" stroke-width="0.5"/><rect x="10.2" y="12.6" width="0.9" height="2.2" fill="#8a94b4"/><rect x="0.5" y="8.5" width="7" height="7" fill="#fff" stroke="#a4a4a4" stroke-width="1"/><path d="M2.6 9.8H6.4V13.6L5.1 12.3L3.3 14.3L1.9 12.9L3.8 11Z" fill="#1c1c8c"/></svg>
<svg style="left:85px;top:157px" width="16" height="16" viewBox="0 0 16 16"><g transform="translate(1.1,0)"><linearGradient id="g13" x1="0" y1="0" x2="1" y2="0"><stop offset="0" stop-color="#fdf0b4"/><stop offset="1" stop-color="#f5d67c"/></linearGradient><path d="M6.6 1.1H12.8Q13.6 1.1 13.6 1.9V4.6H6.6Z" fill="#f5d676" stroke="#d8ae42" stroke-width="0.7"/><rect x="7.7" y="1.9" width="2.3" height="1.2" fill="#fff"/><rect x="10" y="1.9" width="2.2" height="1.2" fill="#3a8ee6"/><path d="M0.3 3Q0.3 2.2 1.1 2.2H5.8L7.2 4.3H13.6V13.7H0.3Z" fill="url(#g13)" stroke="#dcb448" stroke-width="0.7"/><rect x="0.3" y="13.1" width="13.3" height="0.7" fill="#c9a040"/></g><rect x="4" y="5.9" width="4" height="5.9" fill="#c99c3c"/><rect x="4" y="5.9" width="4" height="1" fill="#a87a22"/><rect x="4.5" y="7" width="3" height="3.4" fill="#f5e4a8"/><rect x="5.2" y="7.8" width="1.6" height="1.4" fill="#d09a30"/><rect x="4" y="10.6" width="4" height="1.2" fill="#a27214"/><rect x="7.4" y="6.4" width="0.6" height="4" fill="#d8742a"/></svg>
<svg style="left:85px;top:173px" width="16" height="16" viewBox="0 0 16 16"><g transform="translate(1.1,0)"><linearGradient id="g14" x1="0" y1="0" x2="1" y2="0"><stop offset="0" stop-color="#fdf0b4"/><stop offset="1" stop-color="#f5d67c"/></linearGradient><path d="M6.6 1.1H12.8Q13.6 1.1 13.6 1.9V4.6H6.6Z" fill="#f5d676" stroke="#d8ae42" stroke-width="0.7"/><rect x="7.7" y="1.9" width="2.3" height="1.2" fill="#fff"/><rect x="10" y="1.9" width="2.2" height="1.2" fill="#3a8ee6"/><path d="M0.3 3Q0.3 2.2 1.1 2.2H5.8L7.2 4.3H13.6V13.7H0.3Z" fill="url(#g14)" stroke="#dcb448" stroke-width="0.7"/><rect x="0.3" y="13.1" width="13.3" height="0.7" fill="#c9a040"/></g><rect x="4" y="5.9" width="4" height="5.9" fill="#c99c3c"/><rect x="4" y="5.9" width="4" height="1" fill="#a87a22"/><rect x="4.5" y="7" width="3" height="3.4" fill="#f5e4a8"/><rect x="5.2" y="7.8" width="1.6" height="1.4" fill="#d09a30"/><rect x="4" y="10.6" width="4" height="1.2" fill="#a27214"/><rect x="7.4" y="6.4" width="0.6" height="4" fill="#d8742a"/></svg>
<svg style="left:104px;top:189px" width="16" height="16" viewBox="0 0 16 16"><g transform="translate(0,1.3)"><path d="M2.9 0.6H12.2V11.2H2.9Z" fill="#fffdec" stroke="#b4b4ae" stroke-width="0.7"/><path d="M10.4 1H11.9V11H10.4Z" fill="#f8ecbc"/><path d="M12.1 0.5C13.8 0.2 14.9 1.2 14.5 2.4C14.2 3.3 13.2 3.6 12.3 3.1Z" fill="#d8c064" stroke="#8c7a34" stroke-width="0.5"/><rect x="5" y="3" width="5" height="1" fill="#9ca2cc"/><rect x="5" y="5" width="5" height="1" fill="#9ca2cc"/><rect x="5" y="7" width="5" height="1" fill="#9ca2cc"/><rect x="5" y="9" width="5" height="1" fill="#9ca2cc"/></g><path d="M8.6 12.4H12.2V15H8.6Z" fill="#f0dfa0" stroke="#b4b4ae" stroke-width="0.5"/><rect x="10.2" y="12.6" width="0.9" height="2.2" fill="#8a94b4"/><rect x="0.5" y="8.5" width="7" height="7" fill="#fff" stroke="#a4a4a4" stroke-width="1"/><path d="M2.6 9.8H6.4V13.6L5.1 12.3L3.3 14.3L1.9 12.9L3.8 11Z" fill="#1c1c8c"/></svg>
<svg style="left:85px;top:205px" width="16" height="16" viewBox="0 0 16 16"><g transform="translate(0,0)"><linearGradient id="g15" x1="0" y1="0" x2="1" y2="0"><stop offset="0" stop-color="#fdf0b4"/><stop offset="1" stop-color="#f5d67c"/></linearGradient><path d="M6.6 1.1H12.8Q13.6 1.1 13.6 1.9V4.6H6.6Z" fill="#f5d676" stroke="#d8ae42" stroke-width="0.7"/><rect x="7.7" y="1.9" width="2.3" height="1.2" fill="#fff"/><rect x="10" y="1.9" width="2.2" height="1.2" fill="#3a8ee6"/><path d="M0.3 3Q0.3 2.2 1.1 2.2H5.8L7.2 4.3H13.6V13.7H0.3Z" fill="url(#g15)" stroke="#dcb448" stroke-width="0.7"/><rect x="0.3" y="13.1" width="13.3" height="0.7" fill="#c9a040"/></g><g transform="translate(5.6,4.4) scale(0.7)"><g transform="translate(0,0)"><path d="M2.9 0.6H12.2V11.2H2.9Z" fill="#fffdec" stroke="#b4b4ae" stroke-width="0.7"/><path d="M10.4 1H11.9V11H10.4Z" fill="#f8ecbc"/><path d="M12.1 0.5C13.8 0.2 14.9 1.2 14.5 2.4C14.2 3.3 13.2 3.6 12.3 3.1Z" fill="#d8c064" stroke="#8c7a34" stroke-width="0.5"/><rect x="5" y="3" width="5" height="1" fill="#9ca2cc"/><rect x="5" y="5" width="5" height="1" fill="#9ca2cc"/><rect x="5" y="7" width="5" height="1" fill="#9ca2cc"/><rect x="5" y="9" width="5" height="1" fill="#9ca2cc"/><path d="M1.2 11.2H11.2C12.2 11.2 12.2 13.9 11.2 13.9H1.2C0.1 13.9 0.1 11.2 1.2 11.2Z" fill="#fff8d8" stroke="#c4a850" stroke-width="0.7"/><rect x="1.4" y="12.9" width="9.6" height="0.8" fill="#ead388"/></g></g></svg>
<svg style="left:104px;top:221px" width="16" height="16" viewBox="0 0 16 16"><g transform="translate(0,1)"><path d="M2.9 0.6H12.2V11.2H2.9Z" fill="#fffdec" stroke="#b4b4ae" stroke-width="0.7"/><path d="M10.4 1H11.9V11H10.4Z" fill="#f8ecbc"/><path d="M12.1 0.5C13.8 0.2 14.9 1.2 14.5 2.4C14.2 3.3 13.2 3.6 12.3 3.1Z" fill="#d8c064" stroke="#8c7a34" stroke-width="0.5"/><rect x="5" y="3" width="5" height="1" fill="#9ca2cc"/><rect x="5" y="5" width="5" height="1" fill="#9ca2cc"/><rect x="5" y="7" width="5" height="1" fill="#9ca2cc"/><rect x="5" y="9" width="5" height="1" fill="#9ca2cc"/><path d="M1.2 11.2H11.2C12.2 11.2 12.2 13.9 11.2 13.9H1.2C0.1 13.9 0.1 11.2 1.2 11.2Z" fill="#fff8d8" stroke="#c4a850" stroke-width="0.7"/><rect x="1.4" y="12.9" width="9.6" height="0.8" fill="#ead388"/></g></svg>
<svg style="left:104px;top:237px" width="16" height="16" viewBox="0 0 16 16"><g transform="translate(0,1)"><path d="M2.9 0.6H12.2V11.2H2.9Z" fill="#fffdec" stroke="#b4b4ae" stroke-width="0.7"/><path d="M10.4 1H11.9V11H10.4Z" fill="#f8ecbc"/><path d="M12.1 0.5C13.8 0.2 14.9 1.2 14.5 2.4C14.2 3.3 13.2 3.6 12.3 3.1Z" fill="#d8c064" stroke="#8c7a34" stroke-width="0.5"/><rect x="5" y="3" width="5" height="1" fill="#9ca2cc"/><rect x="5" y="5" width="5" height="1" fill="#9ca2cc"/><rect x="5" y="7" width="5" height="1" fill="#9ca2cc"/><rect x="5" y="9" width="5" height="1" fill="#9ca2cc"/><path d="M1.2 11.2H11.2C12.2 11.2 12.2 13.9 11.2 13.9H1.2C0.1 13.9 0.1 11.2 1.2 11.2Z" fill="#fff8d8" stroke="#c4a850" stroke-width="0.7"/><rect x="1.4" y="12.9" width="9.6" height="0.8" fill="#ead388"/></g></svg>
<svg style="left:104px;top:253px" width="16" height="16" viewBox="0 0 16 16"><g transform="translate(0,1)"><path d="M2.9 0.6H12.2V11.2H2.9Z" fill="#fffdec" stroke="#b4b4ae" stroke-width="0.7"/><path d="M10.4 1H11.9V11H10.4Z" fill="#f8ecbc"/><path d="M12.1 0.5C13.8 0.2 14.9 1.2 14.5 2.4C14.2 3.3 13.2 3.6 12.3 3.1Z" fill="#d8c064" stroke="#8c7a34" stroke-width="0.5"/><rect x="5" y="3" width="5" height="1" fill="#9ca2cc"/><rect x="5" y="5" width="5" height="1" fill="#9ca2cc"/><rect x="5" y="7" width="5" height="1" fill="#9ca2cc"/><rect x="5" y="9" width="5" height="1" fill="#9ca2cc"/><path d="M1.2 11.2H11.2C12.2 11.2 12.2 13.9 11.2 13.9H1.2C0.1 13.9 0.1 11.2 1.2 11.2Z" fill="#fff8d8" stroke="#c4a850" stroke-width="0.7"/><rect x="1.4" y="12.9" width="9.6" height="0.8" fill="#ead388"/></g></svg>
<svg style="left:85px;top:269px" width="16" height="16" viewBox="0 0 16 16"><g transform="translate(0,0)"><linearGradient id="g16" x1="0" y1="0" x2="1" y2="0"><stop offset="0" stop-color="#fdf0b4"/><stop offset="1" stop-color="#f5d67c"/></linearGradient><path d="M6.6 1.1H12.8Q13.6 1.1 13.6 1.9V4.6H6.6Z" fill="#f5d676" stroke="#d8ae42" stroke-width="0.7"/><rect x="7.7" y="1.9" width="2.3" height="1.2" fill="#fff"/><rect x="10" y="1.9" width="2.2" height="1.2" fill="#3a8ee6"/><path d="M0.3 3Q0.3 2.2 1.1 2.2H5.8L7.2 4.3H13.6V13.7H0.3Z" fill="url(#g16)" stroke="#dcb448" stroke-width="0.7"/><rect x="0.3" y="13.1" width="13.3" height="0.7" fill="#c9a040"/></g><path d="M7.6 4.6H15.6V6.8L12.7 10.2V15L10.5 13.4V10.2L7.6 6.8Z" fill="#b9bfc6" stroke="#747b84" stroke-width="0.6"/><rect x="8.2" y="5" width="6.8" height="1.5" fill="#fff"/></svg>
<svg style="left:85px;top:285px" width="16" height="16" viewBox="0 0 16 16"><g transform="translate(0,0)"><linearGradient id="g17" x1="0" y1="0" x2="1" y2="0"><stop offset="0" stop-color="#fdf0b4"/><stop offset="1" stop-color="#f5d67c"/></linearGradient><path d="M6.6 1.1H12.8Q13.6 1.1 13.6 1.9V4.6H6.6Z" fill="#f5d676" stroke="#d8ae42" stroke-width="0.7"/><rect x="7.7" y="1.9" width="2.3" height="1.2" fill="#fff"/><rect x="10" y="1.9" width="2.2" height="1.2" fill="#3a8ee6"/><path d="M0.3 3Q0.3 2.2 1.1 2.2H5.8L7.2 4.3H13.6V13.7H0.3Z" fill="url(#g17)" stroke="#dcb448" stroke-width="0.7"/><rect x="0.3" y="13.1" width="13.3" height="0.7" fill="#c9a040"/></g><rect x="5.6" y="3.8" width="9.4" height="11.6" fill="#8898b0" stroke="#56667e" stroke-width="0.7"/><rect x="5.6" y="3.5" width="9.4" height="1.2" fill="#9a3c36"/><rect x="7.4" y="6" width="5.8" height="7.6" fill="#eef2f8"/><rect x="8.6" y="7.4" width="3.4" height="0.9" fill="#58699a"/><rect x="8.6" y="9.4" width="3.4" height="0.9" fill="#58699a"/><rect x="8.6" y="11.4" width="3.4" height="0.9" fill="#58699a"/></svg>
<svg style="left:47px;top:301px" width="16" height="16" viewBox="0 0 16 16"><g transform="translate(0,0)"><linearGradient id="g18" x1="0" y1="0" x2="1" y2="0"><stop offset="0" stop-color="#fdf0b4"/><stop offset="1" stop-color="#f5d67c"/></linearGradient><path d="M6.6 1.1H12.8Q13.6 1.1 13.6 1.9V4.6H6.6Z" fill="#f5d676" stroke="#d8ae42" stroke-width="0.7"/><rect x="7.7" y="1.9" width="2.3" height="1.2" fill="#fff"/><rect x="10" y="1.9" width="2.2" height="1.2" fill="#3a8ee6"/><path d="M0.3 3Q0.3 2.2 1.1 2.2H5.8L7.2 4.3H13.6V13.7H0.3Z" fill="url(#g18)" stroke="#dcb448" stroke-width="0.7"/><rect x="0.3" y="13.1" width="13.3" height="0.7" fill="#c9a040"/></g><rect x="7.8" y="4.8" width="7.9" height="9.8" fill="#2a7ce0" stroke="#1a5cb8" stroke-width="0.5"/><rect x="8.6" y="5.8" width="2.8" height="2.4" fill="#e2f2ff"/><rect x="12" y="5.8" width="2.8" height="2.4" fill="#e2f2ff"/><rect x="8.6" y="9" width="2.8" height="2.4" fill="#e2f2ff"/><rect x="12" y="9" width="2.8" height="2.4" fill="#e2f2ff"/><rect x="8.6" y="12.2" width="2.8" height="1.6" fill="#e2f2ff"/></svg>
<svg style="left:47px;top:317px" width="16" height="16" viewBox="0 0 16 16"><g transform="translate(0,-0.4) scale(0.8)"><g transform="translate(0,0)"><linearGradient id="g19" x1="0" y1="0" x2="1" y2="0"><stop offset="0" stop-color="#fdf0b4"/><stop offset="1" stop-color="#f5d67c"/></linearGradient><path d="M6.6 1.1H12.8Q13.6 1.1 13.6 1.9V4.6H6.6Z" fill="#f5d676" stroke="#d8ae42" stroke-width="0.7"/><rect x="7.7" y="1.9" width="2.3" height="1.2" fill="#fff"/><rect x="10" y="1.9" width="2.2" height="1.2" fill="#3a8ee6"/><path d="M0.3 3Q0.3 2.2 1.1 2.2H5.8L7.2 4.3H13.6V13.7H0.3Z" fill="url(#g19)" stroke="#dcb448" stroke-width="0.7"/><rect x="0.3" y="13.1" width="13.3" height="0.7" fill="#c9a040"/></g></g><rect x="4.6" y="3.6" width="10.8" height="8.6" fill="#d2d7dd" stroke="#687078" stroke-width="0.7"/><rect x="5.8" y="4.6" width="8.4" height="6.4" fill="#2a52cc"/><rect x="7.6" y="5" width="2.2" height="3.2" fill="#fff"/><rect x="10.4" y="6.2" width="2.6" height="4.4" fill="#16163a"/><rect x="8.4" y="12.4" width="3.4" height="1.5" fill="#80868c"/><rect x="6.2" y="13.9" width="7.8" height="1.2" fill="#a8aeb4"/><rect x="0.6" y="8.8" width="2.4" height="6.4" fill="#b8bdc2" stroke="#6a7076" stroke-width="0.5"/><rect x="1.1" y="12.8" width="1.3" height="1.3" fill="#34c024"/></svg>
<svg style="left:47px;top:333px" width="16" height="16" viewBox="0 0 16 16"><g transform="translate(0,0)"><linearGradient id="g20" x1="0" y1="0" x2="1" y2="0"><stop offset="0" stop-color="#fdf0b4"/><stop offset="1" stop-color="#f5d67c"/></linearGradient><path d="M6.6 1.1H12.8Q13.6 1.1 13.6 1.9V4.6H6.6Z" fill="#f5d676" stroke="#d8ae42" stroke-width="0.7"/><rect x="7.7" y="1.9" width="2.3" height="1.2" fill="#fff"/><rect x="10" y="1.9" width="2.2" height="1.2" fill="#3a8ee6"/><path d="M0.3 3Q0.3 2.2 1.1 2.2H5.8L7.2 4.3H13.6V13.7H0.3Z" fill="url(#g20)" stroke="#dcb448" stroke-width="0.7"/><rect x="0.3" y="13.1" width="13.3" height="0.7" fill="#c9a040"/></g><path d="M6.8 5H12.6L15.2 7.6V15.6H6.8Z" fill="#fff" stroke="#868c94" stroke-width="0.7"/><path d="M8.4 10.2L10 12.2L13.2 8.4" fill="none" stroke="#2a62c8" stroke-width="1.3"/><rect x="10.6" y="13" width="3.4" height="0.7" fill="#9aa0a8"/></svg>
<svg style="left:280px;top:212px" width="16" height="16" viewBox="0 0 16 16"><g transform="translate(1.1,0)"><linearGradient id="g21" x1="0" y1="0" x2="1" y2="0"><stop offset="0" stop-color="#fdf0b4"/><stop offset="1" stop-color="#f5d67c"/></linearGradient><path d="M6.6 1.1H12.8Q13.6 1.1 13.6 1.9V4.6H6.6Z" fill="#f5d676" stroke="#d8ae42" stroke-width="0.7"/><rect x="7.7" y="1.9" width="2.3" height="1.2" fill="#fff"/><rect x="10" y="1.9" width="2.2" height="1.2" fill="#3a8ee6"/><path d="M0.3 3Q0.3 2.2 1.1 2.2H5.8L7.2 4.3H13.6V13.7H0.3Z" fill="url(#g21)" stroke="#dcb448" stroke-width="0.7"/><rect x="0.3" y="13.1" width="13.3" height="0.7" fill="#c9a040"/></g><rect x="4" y="5.9" width="4" height="5.9" fill="#c99c3c"/><rect x="4" y="5.9" width="4" height="1" fill="#a87a22"/><rect x="4.5" y="7" width="3" height="3.4" fill="#f5e4a8"/><rect x="5.2" y="7.8" width="1.6" height="1.4" fill="#d09a30"/><rect x="4" y="10.6" width="4" height="1.2" fill="#a27214"/><rect x="7.4" y="6.4" width="0.6" height="4" fill="#d8742a"/><path d="M1.4 3.2H6.9L7.7 1.1H14.7V13.8H1.4Z" fill="#84744c" opacity="0.5"/></svg>
<svg style="left:280px;top:336px" width="16" height="16" viewBox="0 0 16 16"><path d="M1 13.2C1 9 2.4 7.4 5 7.4C7.4 7.4 8.4 9 8.4 13.2Z" fill="#4e8644" stroke="#2e5626" stroke-width="0.6"/><path d="M4.2 7.6L5.2 10L6.4 7.6Z" fill="#e8e8e0"/><circle cx="5.6" cy="4.2" r="2.3" fill="#c4a684" stroke="#5a4c38" stroke-width="0.6"/><path d="M3.2 4.2C3 1.2 7.6 0.8 8 3.6C6.6 2.8 4.6 3.2 3.2 4.2Z" fill="#7c7058"/><path d="M7.2 15.6C7.2 11.4 8.6 9.6 11.2 9.6C14 9.6 15.8 11.4 15.8 15.6Z" fill="#4078bc" stroke="#244c84" stroke-width="0.6"/><circle cx="11" cy="6.4" r="2.5" fill="#c09470" stroke="#3a2c22" stroke-width="0.6"/><path d="M8.4 6.2C8.2 2.8 13.4 2.6 13.6 5.8C12.2 4.8 10 5 8.4 6.2Z" fill="#2a2230"/></svg>
<!-- red arrow -->
<svg style="left:0;top:0" width="766" height="493" viewBox="0 0 766 493"><path d="M140.1 206L105 242.2L119.4 248.1L63.9 393.6L70.9 396.8L126.9 251.6L141.9 257Z" fill="#fe0000"/></svg>
</body></html>
